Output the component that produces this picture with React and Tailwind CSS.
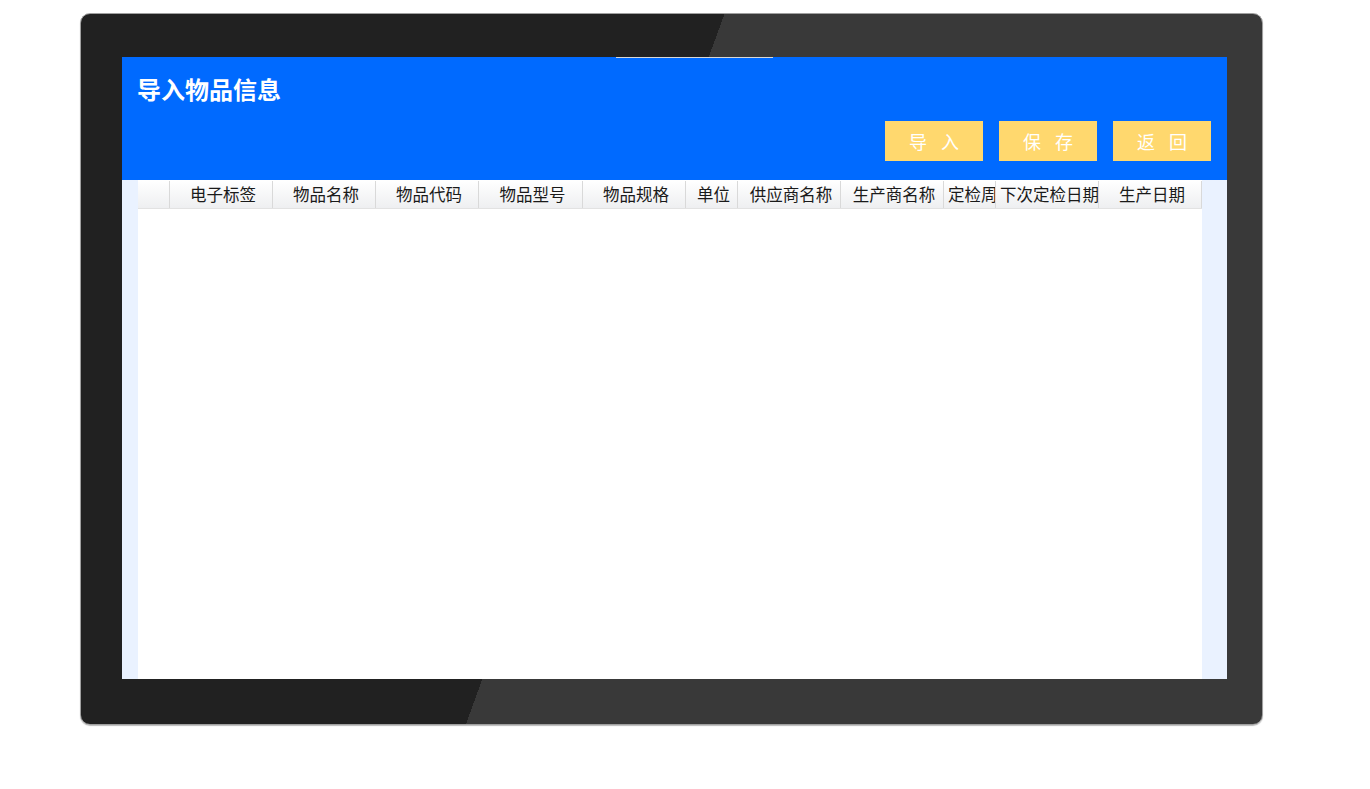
import React from "react";

const columns = [
  { title: "", width: 32 },
  { title: "电子标签", width: 103 },
  { title: "物品名称", width: 103 },
  { title: "物品代码", width: 103 },
  { title: "物品型号", width: 104 },
  { title: "物品规格", width: 103 },
  { title: "单位", width: 52 },
  { title: "供应商名称", width: 103 },
  { title: "生产商名称", width: 103 },
  { title: "定检周期", width: 52 },
  { title: "下次定检日期", width: 103 },
  { title: "生产日期", width: 103 },
];

const buttons = ["导 入", "保 存", "返 回"];

const App = () => {
  return (
    <div
      className="w-[1370px] h-[789px] bg-white overflow-hidden pt-[13px] pl-[80px]"
      style={{ fontFamily: '"Noto Sans CJK SC", "Noto Sans", sans-serif' }}
    >
      <div className="w-[1183px] h-[712px] rounded-[10px] border border-[#a0a0a0] shadow-[0_1px_1px_#bbb] bg-[linear-gradient(110deg,#212121_44.7%,#393939_44.7%)] pl-[41px] pt-[43px]">
        <div className="w-[1105px] h-[622px] flex flex-col">
          <div className="relative h-[123px] bg-[#006aff] flex flex-col">
            <div className="absolute top-0 left-[494px] w-[157px] h-[1px] bg-[#d8d8d8]" />
            <h1 className="pl-[15px] pt-[16px] text-[24px] leading-[32px] font-bold text-white">
              导入物品信息
            </h1>
            <div className="flex justify-end gap-[16px] pr-[16px] mt-[16px]">
              {buttons.map((b) => (
                <button
                  key={b}
                  className="w-[98px] h-[40px] bg-[#ffd86e] text-white text-[18px] tracking-[5px] pl-[5px]"
                >
                  {b}
                </button>
              ))}
            </div>
          </div>
          <div className="flex-1 bg-[#eaf2ff] pl-[16px] pr-[25px]">
            <div className="h-full bg-white pt-[1px]">
              <div className="flex h-[28px] bg-[linear-gradient(#ffffff,#eeeff1)] border-b border-[#e2e2e2]">
                {columns.map((c, i) => (
                  <div
                    key={i}
                    style={{ width: c.width }}
                    className="shrink-0 border-r border-[#d9d9d9] text-center text-[16.5px] leading-[27px] text-[#1a1a1a] whitespace-nowrap overflow-hidden pl-[4px]"
                  >
                    {c.title}
                  </div>
                ))}
              </div>
            </div>
          </div>
        </div>
      </div>
    </div>
  );
};

export default App;
